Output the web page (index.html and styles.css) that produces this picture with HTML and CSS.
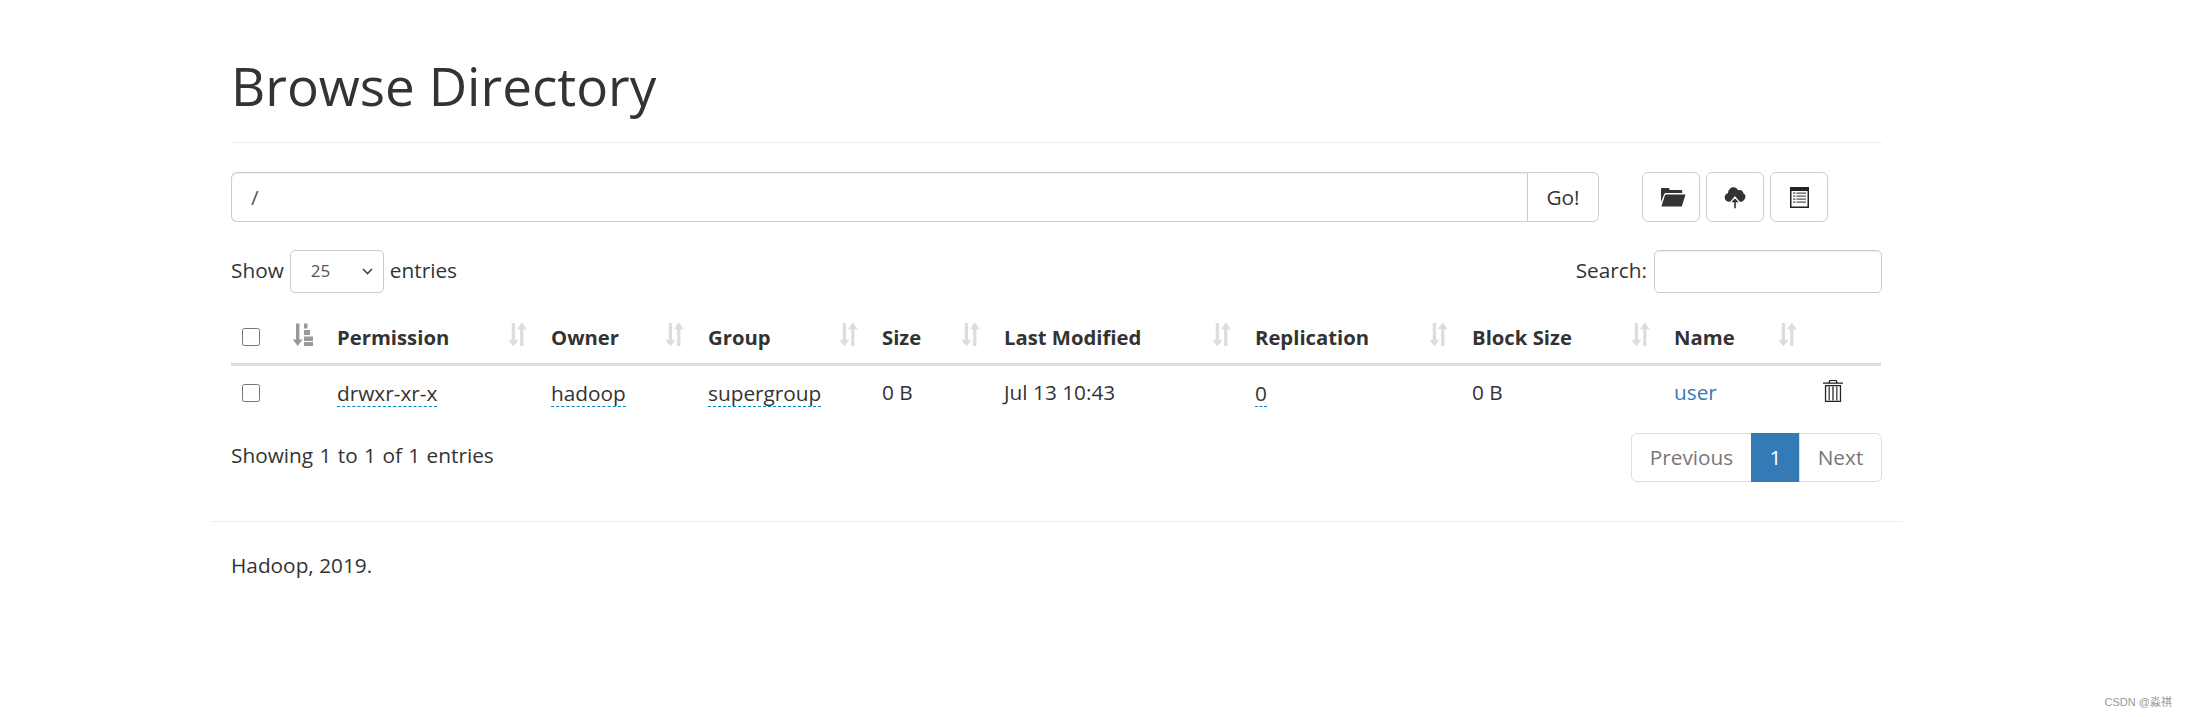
FILE: index.html
```html
<!DOCTYPE html>
<html lang="en">
<head>
<meta charset="utf-8">
<title>Browsing HDFS</title>
<link rel="stylesheet" href="styles.css">
</head>
<body>
<svg class="defs" width="0" height="0" aria-hidden="true">
  <symbol id="sort" viewBox="0 0 20 24">
    <path d="M4.500 1h3.200v16h3.200L6.100 23.500 1.300 17h3.200z"/>
    <path d="M12.500 23h3.200V7h3.200L14.100.5 9.300 7h3.200z"/>
  </symbol>
</svg>
<main class="container">
  <header class="page-header"><h1>Browse Directory</h1></header>

  <div class="toolbar">
    <div class="path-group">
      <input class="path-input" type="text" value="/">
      <button class="go-btn" type="button">Go!</button>
    </div>
    <div class="actions">
      <button class="icon-btn folder" type="button" aria-label="Create directory">
        <svg width="26" height="20" viewBox="0 0 26 20"><path fill="#333" d="M1 6V2.200C1 1.500 1.500 1 2.200 1h6c.6 0 1 .4 1.200 1l.4 1H21c.7 0 1.200.5 1.200 1.200V6H6.200C5 6 4.300 6.600 4 7.600L1 15z"/><path fill="#333" d="M6.500 7.500H25.500L21.800 19.500H1.400L4.800 8.700C5 8 5.700 7.500 6.500 7.500z"/></svg>
      </button>
      <button class="icon-btn" type="button" aria-label="Upload files">
        <svg width="22" height="23" viewBox="0 0 26 27"><path fill="#333" d="M6.500 18.500C3 18.500.8 16.200.8 13.400c0-2.400 1.600-4.300 3.800-4.800C5.100 4.500 7.700 1.500 11 1.500c2.600 0 4.600 1.400 5.600 3.500.6-.3 1.300-.5 1.900-.5 2.500 0 4.300 1.900 4.500 4.400 1.400.5 2.400 1.900 2.400 3.500 0 2.600-1.800 5-4.300 6.100z"/><path fill="#333" stroke="#fff" stroke-width="1.500" d="M11.300 27v-7H7L13 13l6 7h-4.300v7z"/></svg>
      </button>
      <button class="icon-btn" type="button" aria-label="Cut and paste">
        <svg width="19" height="21" viewBox="0 0 19 21"><path fill="#222" fill-rule="evenodd" d="M0 0h19v21H0zM1.500 4v15.500h16V4z"/><path fill="#555" d="M3 5.500h2.500v1.300H3zM6.500 5.500H16v1.300H6.500zM3 8.500h2.500v1.300H3zM6.500 8.500H16v1.300H6.500zM3 11.500h2.500v1.300H3zM6.500 11.500H16v1.300H6.500zM3 14.500h2.500v1.300H3zM6.500 14.500H16v1.300H6.500z"/></svg>
      </button>
    </div>
  </div>

  <div class="table-controls">
    <label class="length"><span class="label-text">Show</span>
      <select class="length-select"><option>25</option></select>
      <span class="label-text">entries</span></label>
    <label class="search"><span class="label-text">Search:</span> <input class="search-input" type="search"></label>
  </div>

  <table class="listing">
    <colgroup>
      <col class="c-check"><col class="c-sort"><col class="c-perm"><col class="c-owner"><col class="c-group"><col class="c-size"><col class="c-mod"><col class="c-rep"><col class="c-block"><col class="c-name"><col class="c-del">
    </colgroup>
    <thead>
      <tr>
        <th class="check"><input type="checkbox" aria-label="Select all"></th>
        <th class="sortable"><svg class="sort-icon active" viewBox="0 0 22 24" aria-hidden="true"><path d="M4 1h3.400v16h3.200L5.700 23.500.8 17H4z"/><path d="M12 1h3.500v5H12zM12 7.500h6v5h-6zM12 14h9v4.500h-9zM12 19.500h9v4h-9z"/></svg></th>
        <th class="sortable">Permission<svg class="sort-icon"><use href="#sort"/></svg></th>
        <th class="sortable">Owner<svg class="sort-icon"><use href="#sort"/></svg></th>
        <th class="sortable">Group<svg class="sort-icon"><use href="#sort"/></svg></th>
        <th class="sortable">Size<svg class="sort-icon"><use href="#sort"/></svg></th>
        <th class="sortable">Last Modified<svg class="sort-icon"><use href="#sort"/></svg></th>
        <th class="sortable">Replication<svg class="sort-icon"><use href="#sort"/></svg></th>
        <th class="sortable">Block Size<svg class="sort-icon"><use href="#sort"/></svg></th>
        <th class="sortable">Name<svg class="sort-icon"><use href="#sort"/></svg></th>
        <th></th>
      </tr>
    </thead>
    <tbody>
      <tr>
        <td class="check"><input type="checkbox" aria-label="Select row"></td>
        <td></td>
        <td><span class="tip">drwxr-xr-x</span></td>
        <td><span class="tip">hadoop</span></td>
        <td><span class="tip">supergroup</span></td>
        <td class="plain">0 B</td>
        <td class="plain">Jul 13 10:43</td>
        <td><span class="tip">0</span></td>
        <td class="plain">0 B</td>
        <td class="plain"><a href="#">user</a></td>
        <td class="del">
          <svg width="20" height="22" viewBox="0 0 19 22" preserveAspectRatio="none" aria-hidden="true"><path fill="#222" fill-rule="evenodd" d="M6 0h7l.8 2.400H19v1.300H0V2.400h5.200zM7 1.100l-.4 1.300h5.800L12 1.100zM1.800 5h15.400v17H1.800zM3 6.200v14.600h13V6.200z"/><path fill="#222" d="M5.300 6.500h1.100v14H5.300zM8.900 6.500h1.200v14H8.900zM12.600 6.500h1.100v14h-1.100z"/></svg>
        </td>
      </tr>
    </tbody>
  </table>

  <div class="table-footer">
    <div class="info">Showing 1 to 1 of 1 entries</div>
    <nav class="pagination">
      <a class="page first" href="#">Previous</a>
      <a class="page current" href="#">1</a>
      <a class="page last" href="#">Next</a>
    </nav>
  </div>

  <footer class="site-footer">
    <p>Hadoop, 2019.</p>
  </footer>
</main>
<div class="watermark">CSDN @淼祺</div>
</body>
</html>
```
FILE: styles.css
```css
* { box-sizing: border-box; }
html, body { margin: 0; padding: 0; }
body {
  background: #fff;
  color: #333;
  font-family: "Open Sans", "Noto Sans", "Liberation Sans", sans-serif;
  font-size: 20.800px;
  line-height: 28px;
  height: 717px;
  overflow: hidden;
}
.defs { position: absolute; }
.container { width: 1692px; margin-left: 211px; }
.page-header { margin: 0 21px 0 20px; padding-top: 58px; height: 143px; border-bottom: 1px solid #eee; }
h1 { margin: 0; font-weight: 400; font-size: 53px; line-height: 56px; color: #333; }
.toolbar { display: flex; margin: 29px 20px 0; height: 50px; }
.path-group { display: flex; width: 1368px; }
.path-input {
  flex: 1; height: 50px; padding: 0 19px; font: inherit; color: #555;
  border: 1px solid #ccc; border-right: 0; border-radius: 6px 0 0 6px;
  box-shadow: inset 0 1px 1px rgba(0,0,0,.075); outline: 0;
}
.go-btn {
  width: 72px; height: 50px; padding: 0; font: inherit; color: #333; background: #fff;
  border: 1px solid #ccc; border-radius: 0 6px 6px 0;
}
.actions { display: flex; gap: 6px; margin-left: 43px; }
.icon-btn {
  display: flex; align-items: center; justify-content: center;
  width: 58px; height: 50px; padding: 0; background: #fff;
  border: 1px solid #ccc; border-radius: 6px;
}
.icon-btn.folder { padding-left: 3px; }
.table-controls { display: flex; justify-content: space-between; align-items: center; margin: 27px 21px 0 20px; height: 44px; }
.length, .search { display: flex; align-items: center; gap: 7px; }
.label-text { padding-bottom: 2px; }
.length { gap: 6px; }
.length-select {
  appearance: none; width: 94px; height: 43px; padding: 0 0 0 20px; font: inherit; font-size: 17px; color: #555;
  background: #fff url("data:image/svg+xml,%3Csvg xmlns='http://www.w3.org/2000/svg' width='11' height='7' viewBox='0 0 11 7'%3E%3Cpath d='M1 1l4.500 4.500L10 1' fill='none' stroke='%23444' stroke-width='1.600'/%3E%3C/svg%3E") no-repeat right 10px center;
  border: 1px solid #ccc; border-radius: 5px;
}
.search-input {
  width: 228px; height: 43px; font: inherit; border: 1px solid #ccc; border-radius: 5px;
  box-shadow: inset 0 1px 1px rgba(0,0,0,.075); outline: 0;
}
.listing { width: 1650px; margin: 14px 20px 0; border-collapse: collapse; table-layout: fixed; }
.c-check { width: 52px; } .c-sort { width: 43px; } .c-perm { width: 214px; } .c-owner { width: 157px; }
.c-group { width: 174px; } .c-size { width: 122px; } .c-mod { width: 251px; } .c-rep { width: 217px; }
.c-block { width: 202px; } .c-name { width: 147px; } .c-del { width: 71px; }
th {
  position: relative; height: 57px; padding: 11px 11px 12px; text-align: left; vertical-align: bottom;
  font-weight: 700; font-size: 20.300px; border-bottom: 3px solid #ddd; white-space: nowrap;
}
td { height: 57px; padding: 11px; vertical-align: middle; white-space: nowrap; }
td.plain { padding-bottom: 13px; }
.check input { display: block; width: 18px; height: 18px; margin: 0; }
th.check input { position: relative; top: -5px; }
.del svg { display: block; margin: -4px 0 0 2px; }
.sort-icon { position: absolute; right: 12px; top: 15px; width: 21px; height: 25px; fill: #ddd; }
.sort-icon.active { fill: #999; width: 22px; }
.tip { border-bottom: 1px dashed #0088cc; display: inline-block; line-height: 25px; margin-top: -2px; }
a { color: #337ab7; text-decoration: none; }
.table-footer { display: flex; justify-content: space-between; align-items: flex-start; margin: 12px 21px 0 20px; }
.info { padding-top: 8px; word-spacing: 1px; }
.pagination { display: flex; height: 49px; }
.page {
  display: flex; align-items: center; justify-content: center; height: 49px; padding-bottom: 2px; color: #777; background: #fff;
  border: 1px solid #ddd; margin-left: -1px;
}
.first { width: 121px; border-radius: 6px 0 0 6px; }
.current { width: 49px; color: #fff; background: #337ab7; border-color: #337ab7; }
.last { width: 83px; border-radius: 0 6px 6px 0; }
.site-footer { margin-top: 39px; padding: 0 20px; border-top: 1px solid #eee; }
.site-footer p { margin: 29px 0 0; }
.watermark {
  position: absolute; right: 15px; bottom: 8px; font-family: "Liberation Sans", "Noto Sans CJK SC", sans-serif;
  font-size: 11px; line-height: 14px; color: #999;
}
```
